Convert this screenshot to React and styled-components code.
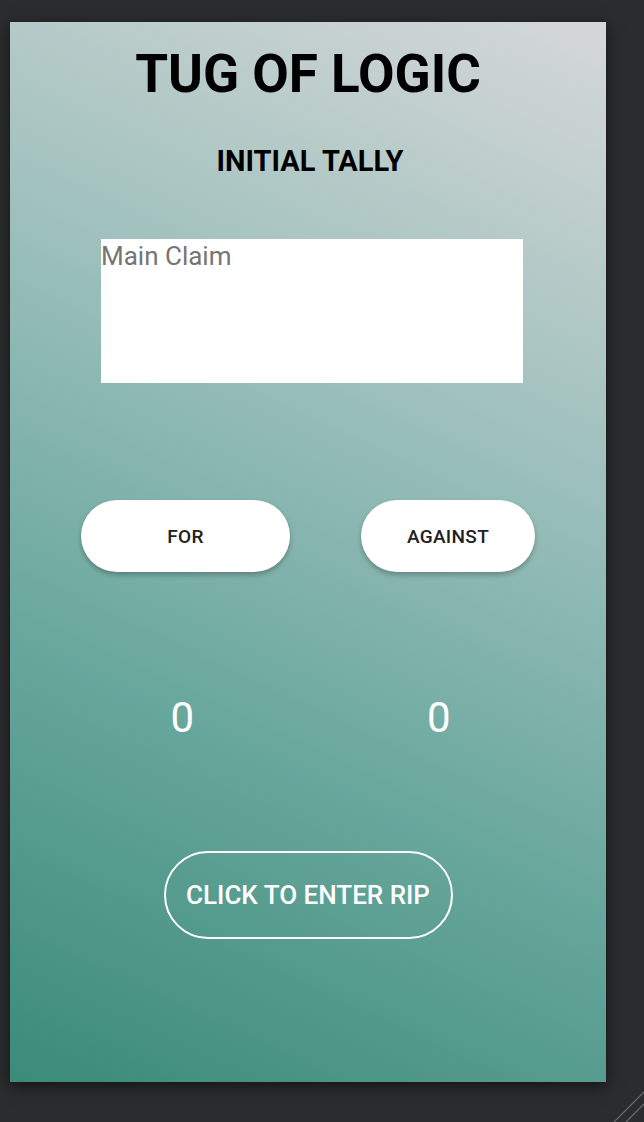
import React, { useState } from 'react';
import styled, { createGlobalStyle } from 'styled-components';

const GlobalStyle = createGlobalStyle`
    html, body {
        margin: 0;
        padding: 0;
        background: #2b2c2e;
        font-family: Roboto, 'Liberation Sans', sans-serif;
    }
    #root {
        min-height: 1122px;
    }
`;

const TugOfLogic = () => {
    const [claim, setClaim] = useState('');
    const [forCount, setForCount] = useState(0);
    const [againstCount, setAgainstCount] = useState(0);

    return (
        <StyledPage>
            <GlobalStyle />
            <StyledCard>
                <StyledTitle>TUG OF LOGIC</StyledTitle>
                <StyledSubtitle>INITIAL TALLY</StyledSubtitle>
                <StyledClaim
                    placeholder="Main Claim"
                    value={claim}
                    onChange={(e) => setClaim(e.target.value)}
                />
                <StyledVoteRow>
                    <StyledVoteButton
                        type="button"
                        width={209}
                        onClick={() => setForCount(forCount + 1)}
                    >
                        FOR
                    </StyledVoteButton>
                    <StyledVoteButton
                        type="button"
                        width={174}
                        onClick={() => setAgainstCount(againstCount + 1)}
                    >
                        AGAINST
                    </StyledVoteButton>
                </StyledVoteRow>
                <StyledCountRow>
                    <span>{forCount}</span>
                    <span>{againstCount}</span>
                </StyledCountRow>
                <StyledEnterButton type="button">
                    CLICK TO ENTER RIP
                </StyledEnterButton>
            </StyledCard>
            <StyledGrip width="30" height="32" viewBox="0 0 30 32">
                <line x1="0" y1="32" x2="30" y2="2" stroke="#6c6d70" strokeWidth="1.2" />
                <line x1="12" y1="32" x2="30" y2="14" stroke="#6c6d70" strokeWidth="1.2" />
            </StyledGrip>
        </StyledPage>
    );
};

export default TugOfLogic;
/*--------------------------------------
------------Styled Components-----------
--------------------------------------*/
const StyledPage = styled.div`
    position: relative;
    width: 644px;
    height: 1122px;
    padding: 22px 0 0 10px;
    box-sizing: border-box;
    overflow: hidden;
`;

const StyledCard = styled.div`
    width: 596px;
    height: 1060px;
    box-sizing: border-box;
    padding-top: 26px;
    display: flex;
    flex-direction: column;
    align-items: center;
    background: linear-gradient(
        205deg,
        #d6d8d8 0%,
        #9dc0bc 35%,
        #6aa89e 65%,
        #3b8a7a 100%
    );
    box-shadow: 0 4px 14px rgba(0, 0, 0, 0.55);
`;

const StyledTitle = styled.h1`
    margin: 0;
    font-size: 53px;
    line-height: 1;
    font-weight: 700;
    color: #000;
`;

const StyledSubtitle = styled.h2`
    margin: 46px 0 0;
    font-size: 29px;
    line-height: 1;
    font-weight: 700;
    color: #000;
    margin-left: 4px;
`;

const StyledClaim = styled.textarea`
    margin-top: 63px;
    width: 422px;
    height: 144px;
    box-sizing: border-box;
    border: none;
    padding: 2px 0 0;
    resize: none;
    outline: none;
    background: #fff;
    font-family: Roboto, 'Liberation Sans', sans-serif;
    font-size: 26px;
    line-height: 1.2;
    color: #222;
    margin-left: 8px;

    &::placeholder {
        color: #757575;
    }
`;

const StyledVoteRow = styled.div`
    margin-top: 117px;
    width: 454px;
    display: flex;
    justify-content: space-between;
`;

const StyledVoteButton = styled.button`
    width: ${(props) => props.width}px;
    height: 72px;
    border: none;
    border-radius: 36px;
    background: #fff;
    color: #212121;
    font-family: Roboto, 'Liberation Sans', sans-serif;
    font-size: 19px;
    font-weight: 500;
    letter-spacing: 0.3px;
    box-shadow: 0 3px 5px rgba(0, 0, 0, 0.25);
    cursor: pointer;
`;

const StyledCountRow = styled.div`
    margin-top: 125px;
    margin-left: 5px;
    width: 280px;
    display: flex;
    justify-content: space-between;

    span {
        font-size: 42px;
        line-height: 1;
        color: #fff;
        font-weight: 400;
    }
`;

const StyledEnterButton = styled.button`
    margin-top: 112px;
    width: 289px;
    height: 88px;
    border: 2px solid #fff;
    border-radius: 44px;
    background: transparent;
    color: #fff;
    font-family: Roboto, 'Liberation Sans', sans-serif;
    font-size: 26px;
    font-weight: 500;
    cursor: pointer;
`;

const StyledGrip = styled.svg`
    position: absolute;
    right: 0;
    bottom: 0;
`;
